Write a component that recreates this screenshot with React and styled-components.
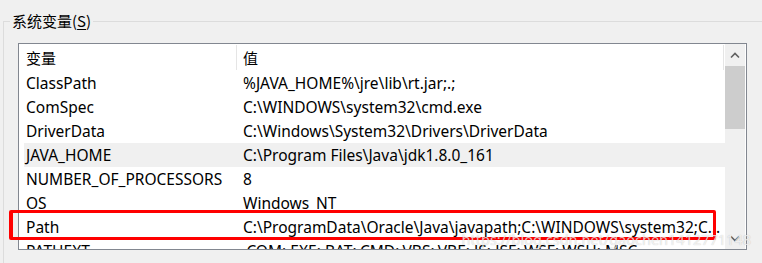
import styled, { createGlobalStyle } from "styled-components";

const GlobalStyle = createGlobalStyle`
  html, body {
    margin: 0;
    padding: 0;
    background: #f0f0f0;
  }
  body {
    font-family: "Noto Sans", "Noto Sans CJK SC", sans-serif;
    font-size: 15.5px;
    color: #000;
  }
`;

const Window = styled.div`
  position: relative;
  width: 762px;
  height: 263px;
  overflow: hidden;
  background: #f0f0f0;
`;

const Group = styled.div`
  position: relative;
  margin: 21px 0 0 3px;
  height: 260px;
  border-top: 1px solid #dcdcdc;
  border-left: 1px solid #dcdcdc;
  padding: 21px 0 0 14px;
`;

const Legend = styled.div`
  position: absolute;
  top: -13px;
  left: 6px;
  padding: 0 2px;
  background: #f0f0f0;
  line-height: 24px;
  font-size: 15px;
  font-family: "Noto Sans CJK SC", sans-serif;

  u {
    text-decoration: underline;
    text-underline-offset: 2px;
  }
`;

const ListBox = styled.div`
  display: flex;
  width: 727px;
  height: 205px;
  border: 1px solid #828790;
  background: #fff;
  overflow: hidden;
`;

const Content = styled.div`
  flex: 1;
  overflow: hidden;
`;

const Header = styled.div`
  display: grid;
  grid-template-columns: 218px 487px 1fr;
  height: 27px;
  align-items: center;
`;

const HeadCell = styled.div`
  height: 25px;
  line-height: 25px;
  padding-left: ${(p) => p.$pad}px;
  border-right: 1px solid #e5e5e5;
  font-size: 15px;
  font-family: "Noto Sans CJK SC", sans-serif;
`;

const Row = styled.div`
  display: grid;
  grid-template-columns: 212px 1fr;
  height: 24px;
  line-height: 24px;
  margin-left: 5px;
  background: ${(p) => (p.$hover ? "#f0f0f0" : "transparent")};
  white-space: nowrap;
`;

const Cell = styled.div`
  padding-left: ${(p) => p.$pad}px;
  overflow: hidden;
`;

const Scrollbar = styled.div`
  width: 20px;
  margin-right: 1px;
  display: flex;
  flex-direction: column;
  background: #f0f0f0;
`;

const Arrow = styled.div`
  height: 22px;
  display: flex;
  align-items: center;
  justify-content: center;
`;

const Thumb = styled.div`
  height: 63px;
  background: #cdcdcd;
`;

const Track = styled.div`
  flex: 1;
`;

const Marker = styled.div`
  position: absolute;
  left: 9px;
  top: 210px;
  width: 700px;
  height: 24px;
  border: 3px solid #ff0000;
  border-left-width: 4px;
  border-radius: 2px;
`;

const Watermark = styled.div`
  position: absolute;
  right: 11px;
  top: 229px;
  font-size: 14.5px;
  color: rgba(255, 255, 255, 0.75);
  text-shadow: 0 0 1px rgba(0, 0, 0, 0.25);
  white-space: nowrap;
`;

const rows = [
  ["ClassPath", "%JAVA_HOME%\\jre\\lib\\rt.jar;.;"],
  ["ComSpec", "C:\\WINDOWS\\system32\\cmd.exe"],
  ["DriverData", "C:\\Windows\\System32\\Drivers\\DriverData"],
  ["JAVA_HOME", "C:\\Program Files\\Java\\jdk1.8.0_161", true],
  ["NUMBER_OF_PROCESSORS", "8"],
  ["OS", "Windows_NT"],
  ["Path", "C:\\ProgramData\\Oracle\\Java\\javapath;C:\\WINDOWS\\system32;C..."],
  ["PATHEXT", ".COM;.EXE;.BAT;.CMD;.VBS;.VBE;.JS;.JSE;.WSF;.WSH;.MSC"],
];

const Chevron = ({ down }) => (
  <svg width="10" height="7" viewBox="0 0 10 7">
    <path
      d={down ? "M1 1.5 L5 5.5 L9 1.5" : "M1 5.5 L5 1.5 L9 5.5"}
      fill="none"
      stroke="#606060"
      strokeWidth="1.6"
    />
  </svg>
);

export default function App() {
  return (
    <Window>
      <GlobalStyle />
      <Group>
        <Legend>
          系统变量(<u>S</u>)
        </Legend>
        <ListBox>
          <Content>
            <Header>
              <HeadCell $pad={7}>变量</HeadCell>
              <HeadCell $pad={6}>值</HeadCell>
            </Header>
            {rows.map(([name, value, hover]) => (
              <Row key={name} $hover={hover}>
                <Cell $pad={2}>{name}</Cell>
                <Cell $pad={7}>{value}</Cell>
              </Row>
            ))}
          </Content>
          <Scrollbar>
            <Arrow>
              <Chevron />
            </Arrow>
            <Thumb />
            <Track />
            <Arrow>
              <Chevron down />
            </Arrow>
          </Scrollbar>
        </ListBox>
      </Group>
      <Marker />
      <Watermark>https://blog.csdn.net/gaochen1412771148</Watermark>
    </Window>
  );
}
